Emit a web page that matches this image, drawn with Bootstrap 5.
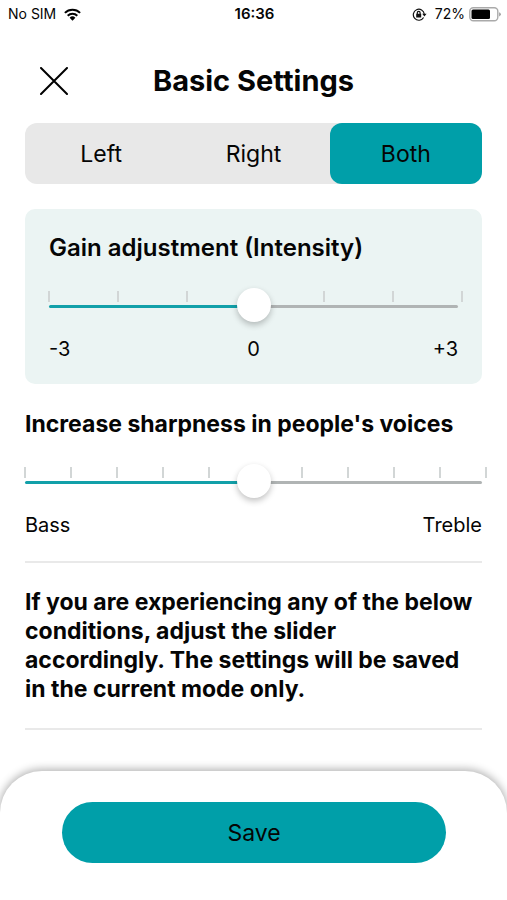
<!DOCTYPE html>
<html lang="en">
<head>
<meta charset="utf-8">
<meta name="viewport" content="width=device-width, initial-scale=1">
<title>Basic Settings</title>
<link href="https://cdn.jsdelivr.net/npm/bootstrap@5.3.0/dist/css/bootstrap.min.css" rel="stylesheet">
<style>
:root { --teal: #009fa9; --gutter: 25px; }
body { font-family: Inter, "Liberation Sans", sans-serif; color: #050505; background: #fff; font-size: 20px; line-height: 29px; }
.status-bar { height: 28px; padding: 0 6px 0 8px; font-size: 14px; line-height: 28px; }
.status-bar .side { flex: 1 1 0; }
.clock { font-size: 15px; }
.status-bar svg, .close-btn svg { display: block; }
.title-bar { display: grid; grid-template-columns: 58px 1fr 58px; padding: 31px var(--gutter) 21px; }
.title-bar h1 { font-size: 29px; line-height: 43px; }
.close-btn { height: 43px; }
.main-area { padding: 0 var(--gutter); }
.segments { background: #e8e8e8; border-radius: 12px; }
.segments .btn { flex: 1 1 0; height: 61px; padding: 2px 0 0; font-size: 23px; line-height: 29px; color: #050505; border: 0; border-radius: 12px; }
.segments .btn-check:checked + .btn { background: var(--teal); color: #050505; }
.gain-card { background: #ebf4f3; border-radius: 10px; padding: 24px 24px 20px; margin-top: 25px; }
.heading { font-size: 23px; line-height: 30px; font-weight: 700; }
.gain-card .heading { font-size: 24px; font-weight: 600; }
.advice { font-size: 23px; line-height: 29px; font-weight: 700; margin: 25px 0 24px; padding-right: 4px; }
.slider { margin-top: 28px; }
.ticks { height: 11px; margin: 0 -5px 0 -1px; }
.ticks i { width: 2px; background: #d2d6d6; }
.slider input { -webkit-appearance: none; appearance: none; display: block; width: 100%; height: 34px; margin: -13px 0 0; background: none; position: relative; }
.slider input::-webkit-slider-runnable-track { height: 3px; border-radius: 2px; background: linear-gradient(90deg, #12a0a9 50%, #b0b4b4 50%); }
.slider input::-webkit-slider-thumb { -webkit-appearance: none; width: 34px; height: 34px; margin-top: -17px; border-radius: 50%; border: 0; background: #fff; box-shadow: 0 3px 6px rgba(0,0,0,.24); }
.scale { display: grid; grid-template-columns: 1fr auto 1fr; margin-top: 12px; }
.voices { margin-top: 25px; }
.rule { height: 2px; background: #e9e9e9; border: 0; opacity: 1; margin: 0; }
.voices + .rule { margin-top: 21px; }
.save-panel { border-radius: 42px 42px 0 0; box-shadow: 0 -1px 9px 1px rgba(0,0,0,.3); padding: 31px 61px 37px 62px; }
.save-btn { height: 61px; padding: 2px 0 0; font-size: 23px; background: var(--teal); color: #050505; border: 0; }
.save-btn:hover { background: #008f98; color: #050505; }
</style>
</head>
<body class="d-flex flex-column min-vh-100 overflow-x-hidden">
<header>
  <div class="status-bar d-flex align-items-center">
    <div class="side d-flex align-items-center">
      <span>No SIM</span>
      <svg class="ms-2" width="17" height="13" viewBox="0 0 17 13" fill="none" stroke="#000" stroke-width="2" aria-label="Wi-Fi"><path d="M.9 4.900a10.800 10.800 0 0 1 15.200 0M3.700 7.800a6.800 6.800 0 0 1 9.600 0"/><path fill="#000" stroke="none" d="M5.600 9.800a4.100 4.100 0 0 1 5.800 0L8.500 12.700z"/></svg>
    </div>
    <span class="clock fw-semibold">16:36</span>
    <div class="side d-flex align-items-center justify-content-end">
      <svg width="15" height="13" viewBox="0 0 15 13" fill="none" stroke="#111" stroke-width="1.200" aria-label="Rotation lock"><path d="M11.600 9.500A5.500 5.500 0 1 1 12.300 6.200"/><path fill="#111" stroke="none" d="M10.200 5.700h4.400l-2.200 2.900zM4.200 5.800h5v3.700h-5z"/><path d="M5.300 6V4.800a1.400 1.400 0 0 1 2.800 0V6"/></svg>
      <span class="ms-2">72%</span>
      <svg class="ms-1" width="32" height="15" viewBox="0 0 32 15" aria-label="Battery"><rect x=".8" y=".8" width="28" height="13" rx="3.500" fill="#fff" stroke="#aaa" stroke-width="1.400"/><rect x="2.500" y="2.500" width="18.500" height="9.600" rx="1.500"/><path d="M30.200 5.200q1.600.7 1.600 2.100t-1.600 2.100z" fill="#999"/></svg>
    </div>
  </div>
  <div class="title-bar">
    <button type="button" class="close-btn btn p-0 border-0 d-flex align-items-center justify-content-center" aria-label="Close"><svg width="28" height="28" viewBox="0 0 28 28" stroke="#000" stroke-width="2" stroke-linecap="round"><path d="M1 1l26 26M27 1L1 27"/></svg></button>
    <h1 class="fw-bold text-center m-0">Basic Settings</h1>
  </div>
</header>
<main class="main-area flex-grow-1">
  <div class="segments d-flex" role="group" aria-label="Side">
    <input type="radio" class="btn-check" name="side" id="left"><label class="btn d-flex align-items-center justify-content-center" for="left">Left</label>
    <input type="radio" class="btn-check" name="side" id="right"><label class="btn d-flex align-items-center justify-content-center" for="right">Right</label>
    <input type="radio" class="btn-check" name="side" id="both" checked><label class="btn d-flex align-items-center justify-content-center" for="both">Both</label>
  </div>
  <section class="gain-card">
    <label class="heading d-block" for="gain">Gain adjustment (Intensity)</label>
    <div class="slider">
      <div class="ticks d-flex justify-content-between"><i></i><i></i><i></i><i></i><i></i><i></i><i></i></div>
      <input type="range" id="gain" min="-3" max="3" value="0">
    </div>
    <div class="scale"><span>-3</span><span>0</span><span class="text-end">+3</span></div>
  </section>
  <section class="voices">
    <label class="heading d-block" for="voices">Increase sharpness in people's voices</label>
    <div class="slider">
      <div class="ticks d-flex justify-content-between"><i></i><i></i><i></i><i></i><i></i><i></i><i></i><i></i><i></i><i></i><i></i></div>
      <input type="range" id="voices" min="-5" max="5" value="0">
    </div>
    <div class="scale"><span>Bass</span><span></span><span class="text-end">Treble</span></div>
  </section>
  <hr class="rule">
  <p class="advice">If you are experiencing any of the below conditions, adjust the slider accordingly. The settings will be saved in the current mode only.</p>
  <hr class="rule">
</main>
<footer class="save-panel bg-white">
  <button type="button" class="save-btn btn rounded-pill w-100">Save</button>
</footer>
</body>
</html>
